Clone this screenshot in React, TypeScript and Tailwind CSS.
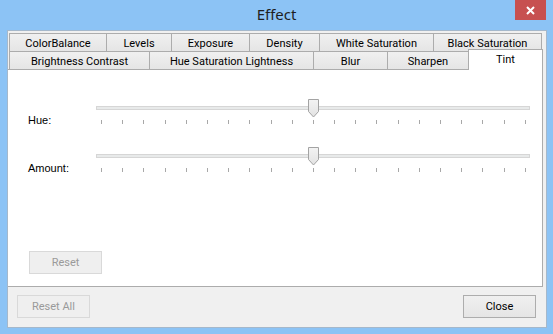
import React from 'react';

const ROW_ONE = [
  { label: 'ColorBalance', w: 'w-[98px]' },
  { label: 'Levels', w: 'w-[66px]' },
  { label: 'Exposure', w: 'w-[79px]' },
  { label: 'Density', w: 'w-[71px]' },
  { label: 'White Saturation', w: 'w-[115px]' },
  { label: 'Black Saturation', w: 'w-[109px]' },
];

const ROW_TWO = [
  { label: 'Brightness Contrast', w: 'w-[141px]' },
  { label: 'Hue Saturation Lightness', w: 'w-[165px]' },
  { label: 'Blur', w: 'w-[75px]' },
  { label: 'Sharpen', w: 'w-[82px]' },
  { label: 'Tint', w: 'w-[75px]', selected: true },
];

const TICKS = Array.from({ length: 21 }, (_, i) => i);

const TAB_FONT = "font-['Roboto',sans-serif] text-[11px] leading-[13px]";

type TabProps = { label: string; w: string; selected?: boolean };

function Tab({ label, w, selected }: TabProps) {
  if (selected) {
    return (
      <div
        className={`relative z-10 -ml-px -mt-[2px] -mb-px h-[21px] ${w} flex justify-center border border-b-0 border-[#acacac] bg-white pt-[3px] text-black ${TAB_FONT}`}
      >
        {label}
      </div>
    );
  }
  return (
    <div
      className={`-ml-px first:ml-0 h-[18px] ${w} flex justify-center border border-b-0 border-[#acacac] bg-linear-to-b from-[#f0f0f0] to-[#e5e5e5] pt-[3px] text-black ${TAB_FONT}`}
    >
      {label}
    </div>
  );
}

function Thumb() {
  return (
    <svg width="11" height="19" viewBox="0 0 11 19">
      <defs>
        <linearGradient id="thumbFill" x1="0" y1="0" x2="0" y2="1">
          <stop offset="0" stopColor="#f3f3f3" />
          <stop offset="1" stopColor="#e2e2e2" />
        </linearGradient>
      </defs>
      <path d="M0.5 0.5 H10.5 V12.5 L5.5 18 L0.5 12.5 Z" fill="url(#thumbFill)" stroke="#a3a3a3" />
    </svg>
  );
}

function TrackBar({ value }: { value: number }) {
  const left = 5 + value * 21.2 - 5;
  return (
    <div className="relative flex h-[25px] w-[434px] flex-col">
      <div className="mt-[7px] h-[4px] w-full border border-[#d6d6d6] bg-[#e8eaea]" />
      <div className="ml-[5px] mt-[10px] flex w-[425px] justify-between">
        {TICKS.map(i => (
          <div key={i} className="h-[4px] w-px bg-[#a8a8a8]" />
        ))}
      </div>
      <div className="absolute top-0" style={{ left }}>
        <Thumb />
      </div>
    </div>
  );
}

function SliderRow({ label, value }: { label: string; value: number }) {
  return (
    <div className="flex h-[48px] items-start pl-[20px]">
      <div className="w-[68px] pt-[15px] font-['Liberation_Sans',sans-serif] text-[11px] leading-[13px] text-black">
        {label}
      </div>
      <TrackBar value={value} />
    </div>
  );
}

function Button({ label, disabled }: { label: string; disabled?: boolean }) {
  return (
    <div
      className={`flex h-[23px] w-[73px] items-center justify-center border ${TAB_FONT} ${
        disabled
          ? 'border-[#d9d9d9] bg-[#efefef] text-[#9a9a9a]'
          : 'border-[#adadad] bg-linear-to-b from-[#f0f0f0] to-[#e5e5e5] text-black'
      }`}
    >
      {label}
    </div>
  );
}

export default function App() {
  return (
    <div className="flex h-[334px] w-[553px] flex-col bg-[#8cc3f5]">
      <div className="grid h-[30px] grid-cols-[1fr_auto_1fr]">
        <div />
        <div className="pt-[4px] font-['Noto_Sans',sans-serif] text-[15px] leading-[20px] text-[#1e1e1e]">Effect</div>
        <div className="flex justify-end pr-[7px]">
          <div className="flex h-[20px] w-[31px] items-center justify-center bg-[#c75050]">
            <svg width="9" height="9" viewBox="0 0 9 9">
              <path d="M1 1 L8 8 M8 1 L1 8" stroke="#ffffff" strokeWidth="2" />
            </svg>
          </div>
        </div>
      </div>

      <div className="ml-[7px] flex h-[298px] w-[540px] flex-col border border-[#a5b8cb] bg-[#f0f0f0]">
        <div className="flex flex-col pl-px pt-[2px]">
          <div className="flex">
            {ROW_ONE.map(tab => (
              <Tab key={tab.label} {...tab} />
            ))}
          </div>
          <div className="flex">
            {ROW_TWO.map(tab => (
              <Tab key={tab.label} {...tab} />
            ))}
          </div>
        </div>

        <div className="flex h-[218px] w-[535px] flex-col border border-l-0 border-[#acacac] bg-white pt-[29px]">
          <SliderRow label="Hue:" value={10} />
          <SliderRow label="Amount:" value={10} />
          <div className="mb-[12px] ml-[21px] mt-auto">
            <Button label="Reset" disabled />
          </div>
        </div>

        <div className="flex justify-between pl-[9px] pr-[10px] pt-[8px]">
          <Button label="Reset All" disabled />
          <Button label="Close" />
        </div>
      </div>
    </div>
  );
}
